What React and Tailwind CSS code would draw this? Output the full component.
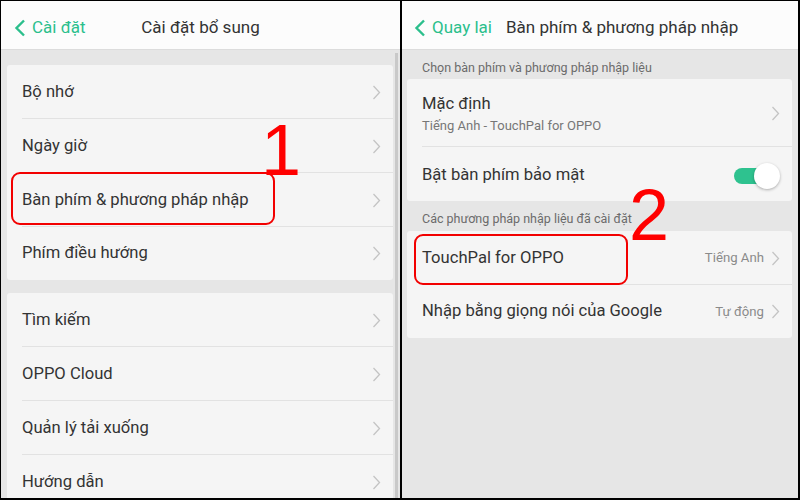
import React from "react";

const font = { fontFamily: "Roboto, 'Noto Sans', sans-serif" };

function Chevron() {
  return (
    <svg width="9" height="15" viewBox="0 0 9 15" className="shrink-0">
      <polyline points="1.5,1 7.5,7.5 1.5,14" fill="none" stroke="#c4c4c4" strokeWidth="1.3" />
    </svg>
  );
}

function BackChevron() {
  return (
    <svg width="12" height="18" viewBox="0 0 12 18" className="shrink-0">
      <polyline points="10,1.5 2.5,9 10,16.5" fill="none" stroke="#2bbf8c" strokeWidth="2.4" />
    </svg>
  );
}

function Row({ label, value, divider = true, h = "h-[54px]" }) {
  return (
    <div className={`relative flex shrink-0 items-center ${h} pl-[15px] pr-[12px]`}>
      <span className="flex-1 text-[16.6px] text-[#333333]">{label}</span>
      {value && <span className="mr-[7px] text-[13.2px] text-[#8a8a8a]">{value}</span>}
      <Chevron />
      {divider && <div className="absolute bottom-0 left-[15px] right-0 h-px bg-[#e2e2e2]" />}
    </div>
  );
}

export default function App() {
  return (
    <div className="flex h-[500px] w-[800px] gap-[2px] bg-black pb-[2px] pl-px pr-[2px] pt-px" style={font}>
      {/* Left panel */}
      <div className="relative flex w-[399px] flex-col overflow-hidden bg-[#e6e6e6]">
        <div className="relative flex h-[49px] shrink-0 items-center border-b border-[#dcdcdc] bg-[#fcfcfc] pt-[5px]">
          <div className="flex items-center gap-[6px] pl-[13px]">
            <BackChevron />
            <span className="text-[17px] text-[#2bbf8c]">Cài đặt</span>
          </div>
          <div className="pointer-events-none absolute left-0 right-0 text-center text-[17px] text-[#333333]">Cài đặt bổ sung</div>
        </div>
        <div className="ml-[6px] mr-[7px] mt-[15px] shrink-0 rounded-[3px] bg-[#f5f5f5]">
          <Row label="Bộ nhớ" />
          <Row label="Ngày giờ" />
          <Row label="Bàn phím & phương pháp nhập" />
          <Row label="Phím điều hướng" divider={false} h="h-[53px]" />
        </div>
        <div className="ml-[6px] mr-[7px] mt-[13px] shrink-0 rounded-[3px] bg-[#f5f5f5]">
          <Row label="Tìm kiếm" />
          <Row label="OPPO Cloud" />
          <Row label="Quản lý tải xuống" />
          <Row label="Hướng dẫn" />
        </div>
        {/* scrollbar */}
        <div className="absolute bottom-0 right-[2px] top-[52px] w-[3px] bg-[#c9c9c9]" />
        {/* annotations */}
        <div className="absolute left-[10px] top-[171px] h-[53px] w-[264px] rounded-[9px] border-2 border-[#f20000]" />
        <div
          className="absolute left-[260px] top-[113px] text-[72px] leading-none text-[#ff0000]"
          style={{ fontFamily: "'Liberation Sans', Arial, sans-serif" }}
        >
          1
        </div>
      </div>

      {/* Right panel */}
      <div className="relative flex flex-1 flex-col overflow-hidden bg-[#e6e6e6]">
        <div className="flex h-[49px] shrink-0 items-center border-b border-[#dcdcdc] bg-[#fcfcfc] pt-[5px]">
          <div className="flex items-center gap-[6px] pl-[12px]">
            <BackChevron />
            <span className="text-[17px] text-[#2bbf8c]">Quay lại</span>
          </div>
          <span className="ml-[14px] text-[17px] text-[#333333]">Bàn phím &amp; phương pháp nhập</span>
        </div>
        <div className="flex h-[29px] shrink-0 items-center pl-[20px] pt-[7px] text-[12.5px] text-[#6b6b6b]">
          Chọn bàn phím và phương pháp nhập liệu
        </div>
        <div className="ml-[5px] mr-[6px] shrink-0 rounded-[3px] bg-[#f5f5f5]">
          <div className="relative flex h-[68px] items-center pl-[15px] pr-[12px]">
            <div className="flex flex-1 flex-col">
              <span className="text-[16.6px] leading-[24px] text-[#333333]">Mặc định</span>
              <span className="text-[13px] leading-[19px] text-[#777777]">Tiếng Anh - TouchPal for OPPO</span>
            </div>
            <Chevron />
            <div className="absolute bottom-0 left-[15px] right-0 h-px bg-[#e2e2e2]" />
          </div>
          <div className="flex h-[54px] items-center pl-[15px] pr-[12px] pt-[3px]">
            <span className="flex-1 text-[16.6px] text-[#333333]">Bật bàn phím bảo mật</span>
            <div className="relative h-[26px] w-[46px]">
              <div className="absolute left-0 top-[5px] h-[16px] w-[36px] rounded-full bg-[#2ec28f]" />
              <div className="absolute right-0 top-0 h-[26px] w-[26px] rounded-full bg-white shadow-[0_1px_3px_rgba(0,0,0,0.3)]" />
            </div>
          </div>
        </div>
        <div className="flex h-[30px] shrink-0 items-center pl-[20px] pt-[6px] text-[12.5px] text-[#6b6b6b]">
          Các phương pháp nhập liệu đã cài đặt
        </div>
        <div className="ml-[5px] mr-[6px] shrink-0 rounded-[3px] bg-[#f5f5f5]">
          <Row label="TouchPal for OPPO" value="Tiếng Anh" />
          <Row label="Nhập bằng giọng nói của Google" value="Tự động" divider={false} h="h-[53px]" />
        </div>
        <div className="absolute left-[12px] top-[233px] h-[51px] w-[214px] rounded-[9px] border-2 border-[#f20000]" />
        <div
          className="absolute left-[227px] top-[178px] text-[72px] leading-none text-[#ff0000]"
          style={{ fontFamily: "'Liberation Sans', Arial, sans-serif" }}
        >
          2
        </div>
      </div>
    </div>
  );
}
